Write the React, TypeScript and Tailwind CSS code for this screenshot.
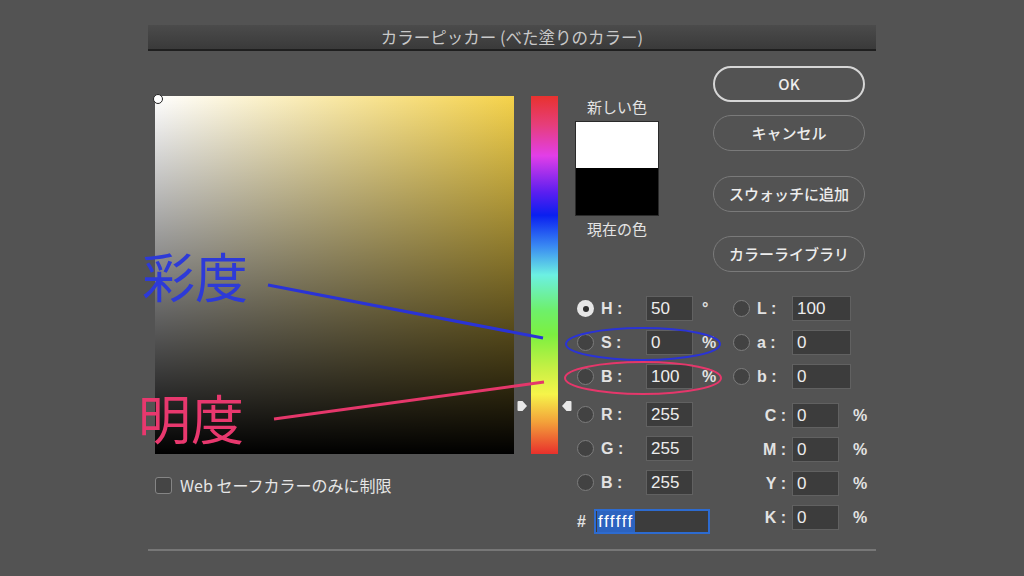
import React from "react";

const FONT = { fontFamily: '"Liberation Sans", "Noto Sans CJK JP", sans-serif' };
const JP = { fontFamily: '"Noto Sans CJK JP", "Liberation Sans", sans-serif' };

function Radio({ on = false }: { on?: boolean }) {
    if (on) {
        return (
            <div className="w-[17px] h-[17px] rounded-full bg-[#e6e6e6] flex items-center justify-center flex-shrink-0">
                <div className="w-[6px] h-[6px] rounded-full bg-[#2e2e2e]" />
            </div>
        );
    }
    return <div className="w-[17px] h-[17px] rounded-full border-[1.5px] border-[#7c7c7c] bg-[#424242] flex-shrink-0" />;
}

function Field({ value, w }: { value: string; w: string }) {
    return (
        <div className={`${w} h-[25px] bg-[#3c3c3c] border border-[#616161] flex items-center pl-[4px] text-[17px] text-[#ececec]`}>
            {value}
        </div>
    );
}

function LeftRow({ label, value, unit, on, mt }: { label: string; value: string; unit?: string; on?: boolean; mt: string }) {
    return (
        <div className={`flex items-center h-[25px] ${mt}`}>
            <Radio on={on} />
            <span className="ml-[7px] w-[45px] text-[16px] font-bold text-[#e2e2e2]">{label}</span>
            <Field value={value} w="w-[47px]" />
            <span className="ml-[9px] text-[16px] font-bold text-[#e2e2e2]">{unit}</span>
        </div>
    );
}

function ButtonPill({ children, primary = false, mt }: { children: React.ReactNode; primary?: boolean; mt: string }) {
    return (
        <div
            className={`${mt} w-[152px] h-[36px] rounded-full flex items-center justify-center text-[15px] font-medium text-[#ededed] ${
                primary ? "border-2 border-[#d6d6d6]" : "border-[1.5px] border-[#7a7a7a]"
            }`}
            style={JP}
        >
            {children}
        </div>
    );
}

export default function App() {
    return (
        <div className="relative w-[1024px] h-[576px] overflow-hidden bg-[#535353] pt-[25px] px-[148px]" style={FONT}>
            {/* title bar */}
            <div className="h-[26px] flex items-center justify-center bg-[linear-gradient(to_bottom,#4b4b4b,#3a3a3a)] border-b-2 border-[#1f1f1f]">
                <span className="text-[16.5px] text-[#c9c9c9]" style={JP}>カラーピッカー (べた塗りのカラー)</span>
            </div>

            <div className="flex">
                {/* color field + checkbox */}
                <div className="ml-[7px] mt-[45px] flex flex-col">
                    <div className="relative w-[359px] h-[358px] bg-[linear-gradient(to_top,#000,transparent),linear-gradient(to_right,#fff,#f5d24a)]">
                        <div className="absolute -left-[2px] -top-[2px] w-[10px] h-[10px] rounded-full bg-white border border-[#222]" />
                    </div>
                    <div className="mt-[19px] flex items-center">
                        <div className="w-[17px] h-[17px] rounded-[3px] border-[1.5px] border-[#858585] bg-[#454545]" />
                        <span className="ml-[8px] text-[16px] text-[#e6e6e6]" style={JP}>
                            Web セーフカラーのみに制限
                        </span>
                    </div>
                </div>

                {/* hue slider */}
                <div className="relative ml-[17px] mt-[45px] w-[27px] h-[358px] bg-[linear-gradient(to_bottom,#e8322e_0%,#e63e7a_8%,#e23ee8_16.7%,#5a1ef0_27%,#0a1ff0_33.3%,#3a8af2_42%,#6cf0e2_50%,#6ef06a_60%,#7cf040_66.7%,#c6f044_76%,#f6f44a_83.3%,#f3a23a_91%,#e8302c_100%)]">
                    <svg className="absolute -left-[14px] top-[304px]" width="11" height="12" viewBox="0 0 11 12">
                        <path d="M1.5 1 H5.5 L10 6 L5.5 11 H1.5 Q0.5 11 0.5 10 V2 Q0.5 1 1.5 1 Z" fill="#e8e8e8" />
                    </svg>
                    <svg className="absolute -right-[14px] top-[304px]" width="11" height="12" viewBox="0 0 11 12">
                        <path d="M9.5 1 H5.5 L1 6 L5.5 11 H9.5 Q10.5 11 10.5 10 V2 Q10.5 1 9.5 1 Z" fill="#e8e8e8" />
                    </svg>
                </div>

                {/* right side */}
                <div className="ml-[17px] mt-[15px] flex flex-col">
                    <div className="flex">
                        <div className="w-[138px] pt-[30px] flex flex-col">
                            <div className="w-[84px] text-center text-[15px] text-[#e4e4e4]" style={JP}>新しい色</div>
                            <div className="mt-[2px] w-[84px] h-[95px] border border-[#2a2a2a] flex flex-col">
                                <div className="flex-1 bg-white" />
                                <div className="flex-1 bg-black" />
                            </div>
                            <div className="mt-[2px] w-[84px] text-center text-[15px] text-[#e4e4e4]" style={JP}>現在の色</div>
                        </div>
                        <div className="flex flex-col">
                            <ButtonPill primary mt="mt-0">OK</ButtonPill>
                            <ButtonPill mt="mt-[13px]">キャンセル</ButtonPill>
                            <ButtonPill mt="mt-[25px]">スウォッチに追加</ButtonPill>
                            <ButtonPill mt="mt-[24px]">カラーライブラリ</ButtonPill>
                        </div>
                    </div>

                    {/* value fields */}
                    <div className="mt-[24px] flex">
                        <div className="w-[158px] pl-[2px] flex flex-col">
                            <LeftRow label="H :" value="50" unit="°" on mt="mt-0" />
                            <LeftRow label="S :" value="0" unit="%" mt="mt-[9px]" />
                            <LeftRow label="B :" value="100" unit="%" mt="mt-[9px]" />
                            <LeftRow label="R :" value="255" mt="mt-[13px]" />
                            <LeftRow label="G :" value="255" mt="mt-[9px]" />
                            <LeftRow label="B :" value="255" mt="mt-[9px]" />
                            <div className="mt-[14px] flex items-center h-[25px]">
                                <span className="w-[17px] text-[16px] font-bold text-[#e2e2e2]">#</span>
                                <div className="w-[116px] h-[25px] bg-[#3c3c3c] border-2 border-[#2d6bd0] flex items-center pl-[1px]">
                                    <span className="bg-[#2c63c0] text-white text-[17px] tracking-[1.5px] leading-[21px] pl-[1px] pr-[1px]">ffffff</span>
                                </div>
                            </div>
                        </div>
                        <div className="flex flex-col">
                            {[
                                ["L :", "100"],
                                ["a :", "0"],
                                ["b :", "0"],
                            ].map(([l, v], i) => (
                                <div key={l} className={`flex items-center h-[25px] ${i ? "mt-[9px]" : ""}`}>
                                    <Radio />
                                    <span className="ml-[7px] w-[35px] text-[16px] font-bold text-[#e2e2e2]">{l}</span>
                                    <Field value={v} w="w-[59px]" />
                                </div>
                            ))}
                            {["C", "M", "Y", "K"].map((l, i) => (
                                <div key={l} className={`flex items-center h-[25px] ${i ? "mt-[9px]" : "mt-[14px]"}`}>
                                    <span className="w-[59px] pr-[6px] text-right text-[16px] font-bold text-[#e2e2e2]">{l} :</span>
                                    <Field value="0" w="w-[47px]" />
                                    <span className="ml-[14px] text-[16px] font-bold text-[#e2e2e2]">%</span>
                                </div>
                            ))}
                        </div>
                    </div>
                </div>
            </div>

            {/* bottom rule */}
            <div className="mt-[15px] h-[2px] bg-[#777777]" />

            {/* annotations */}
            <svg className="absolute left-0 top-0 pointer-events-none" width="1024" height="576">
                <line x1="268" y1="285" x2="543" y2="338" stroke="#2a33d6" strokeWidth="3" />
                <line x1="274" y1="419" x2="544" y2="382" stroke="#e5376b" strokeWidth="3" />
                <ellipse cx="643" cy="344" rx="77" ry="16" fill="none" stroke="#2a33d6" strokeWidth="2" />
                <ellipse cx="643" cy="378" rx="78" ry="16" fill="none" stroke="#e5376b" strokeWidth="2" />
            </svg>
            <div className="absolute left-[142px] top-[245px] text-[53px] leading-[60px] text-[#2d3ad8]" style={JP}>彩度</div>
            <div className="absolute left-[138px] top-[387px] text-[53px] leading-[60px] text-[#e8386e]" style={JP}>明度</div>
        </div>
    );
}
